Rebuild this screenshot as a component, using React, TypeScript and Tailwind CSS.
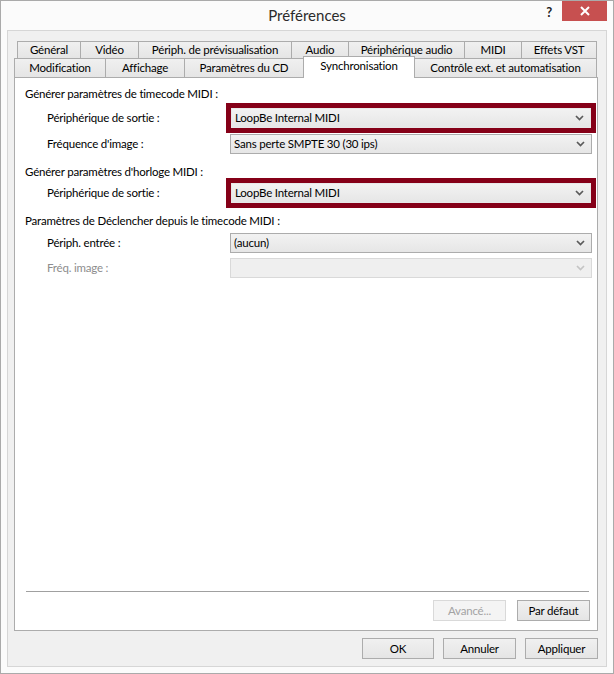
import React from 'react';

const Chevron = ({ disabled }: { disabled?: boolean }) => (
  <svg width="9" height="6" viewBox="0 0 9 6" className="shrink-0">
    <polyline points="1,1 4.5,4.5 8,1" fill="none" stroke={disabled ? '#c4c4c4' : '#5a5a5a'} strokeWidth="1.7" />
  </svg>
);

// combobox box, optionally wrapped in the dark red highlight
const Combo = ({ value, disabled, framed }: { value?: string; disabled?: boolean; framed?: boolean }) => (
  <div
    className={`flex items-center justify-between h-full pl-[3px] pr-[6px] ${
      framed
        ? 'bg-gradient-to-b from-[#f2f2f2] to-[#e6e6e6] border border-[#e8e8e8]'
        : disabled
        ? 'bg-[#efefef] border border-[#d9d9d9]'
        : 'bg-gradient-to-b from-[#f2f2f2] to-[#e6e6e6] border border-[#acacac]'
    }`}
  >
    <span className="text-[#000]">{value}</span>
    <Chevron disabled={disabled} />
  </div>
);

const Row = ({ label, children, disabled }: { label: string; children: React.ReactNode; disabled?: boolean }) => (
  <div className="flex items-center h-[20px]">
    <div className={`w-[215px] pl-[32px] ${disabled ? 'text-[#8d8d8d]' : 'text-[#000]'}`}>{label}</div>
    <div className="w-[362px] h-full">{children}</div>
  </div>
);

const FramedRow = ({ label, value }: { label: string; value: string }) => (
  <div className="flex items-center h-[30px]">
    <div className="w-[211px] pl-[32px]">{label}</div>
    <div className="w-[370px] h-full border-[5px] border-[#850018]">
      <Combo value={value} framed />
    </div>
  </div>
);

const Btn = ({ label, disabled, w = 'w-[73px]' }: { label: string; disabled?: boolean; w?: string }) => (
  <div
    className={`${w} h-[21px] flex items-center justify-center ${
      disabled
        ? 'bg-[#f4f4f4] border border-[#d9d9d9] text-[#a3a3a3]'
        : 'bg-gradient-to-b from-[#f0f0f0] to-[#e5e5e5] border border-[#acacac] text-[#000]'
    }`}
  >
    {label}
  </div>
);

// widths include the 1px that overlaps the next tab
const row1 = [
  ['Général', 64],
  ['Vidéo', 59],
  ['Périph. de prévisualisation', 154],
  ['Audio', 58],
  ['Périphérique audio', 117],
  ['MIDI', 58],
  ['Effets VST', 76],
] as const;

const row2 = [
  ['Modification', 92],
  ['Affichage', 80],
  ['Paramètres du CD', 120],
  ['Synchronisation', 112],
  ['Contrôle ext. et automatisation', 183],
] as const;

export default function App() {
  return (
    <div className="w-[614px] h-[674px] bg-[#fbfbfb] border border-[#aaaaaa] flex flex-col font-['Lato','Noto_Sans',sans-serif] text-[11.5px] tracking-[-0.2px] text-black">
      {/* Title bar */}
      <div className="relative h-[29px] flex items-center justify-center shrink-0">
        <span className="text-[15px] tracking-normal text-[#2b2b2b] -mt-[1px]">Préférences</span>
        <div className="absolute right-[6px] top-0 flex items-start">
          <span className="text-[13px] font-bold text-[#222] mt-[2px] mr-[10px]">?</span>
          <div className="w-[45px] h-[20px] bg-[#c75050] flex items-center justify-center">
            <svg width="10" height="10" viewBox="0 0 10 10">
              <path d="M1 1 L9 9 M9 1 L1 9" stroke="#fff" strokeWidth="2" />
            </svg>
          </div>
        </div>
      </div>

      {/* Client area */}
      <div className="mx-[6px] mb-[6px] flex-1 bg-[#f0f0f0] border border-[#d6d6d6] flex flex-col pl-[6px] pr-[8px] pt-[10px] pb-[7px]">
        {/* Tabs */}
        <div className="flex pl-[3px] h-[17px]">
          {row1.map(([t, w]) => (
            <div
              key={t}
              style={{ width: w }}
              className="h-full -mr-px border border-b-0 border-[#acacac] bg-gradient-to-b from-[#f0f0f0] to-[#e5e5e5] flex items-center justify-center"
            >
              {t}
            </div>
          ))}
        </div>
        <div className="flex h-[19px] items-end">
          {row2.map(([t, w]) => {
            const active = t === 'Synchronisation';
            return (
              <div
                key={t}
                style={{ width: w }}
                className={`-mr-px border border-b-0 border-[#acacac] flex items-center justify-center ${
                  active ? 'relative z-10 h-[22px] -mb-px bg-white pb-[4px]' : 'h-full bg-gradient-to-b from-[#f0f0f0] to-[#e5e5e5]'
                }`}
              >
                {t}
              </div>
            );
          })}
        </div>

        {/* Panel */}
        <div className="flex-1 bg-white border border-[#acacac] flex flex-col">
          <div className="h-[25px] pt-[7px] pl-[10px] flex items-center">Générer paramètres de timecode MIDI :</div>
          <FramedRow label="Périphérique de sortie :" value="LoopBe Internal MIDI" />
          <div className="mt-[1px]">
            <Row label="Fréquence d'image :">
              <Combo value="Sans perte SMPTE 30 (30 ips)" />
            </Row>
          </div>
          <div className="h-[24px] pt-[12px] pl-[10px] flex items-center">Générer paramètres d'horloge MIDI :</div>
          <FramedRow label="Périphérique de sortie :" value="LoopBe Internal MIDI" />
          <div className="h-[25px] pl-[10px] flex items-center">Paramètres de Déclencher depuis le timecode MIDI :</div>
          <Row label="Périph. entrée :">
            <Combo value="(aucun)" />
          </Row>
          <div className="mt-[5px]">
            <Row label="Fréq. image :" disabled>
              <Combo disabled />
            </Row>
          </div>

          <div className="flex-1" />
          <div className="ml-[11px] mr-[8px] h-px bg-[#a0a0a0]" />
          <div className="flex justify-end gap-[11px] mt-[8px] mb-[9px] mr-[7px]">
            <Btn label="Avancé..." disabled />
            <Btn label="Par défaut" />
          </div>
        </div>

        {/* Dialog buttons */}
        <div className="flex justify-end gap-[9px] mt-[7px]">
          <Btn label="OK" w="w-[72px]" />
          <Btn label="Annuler" w="w-[73px]" />
          <Btn label="Appliquer" w="w-[73px]" />
        </div>
      </div>
    </div>
  );
}
